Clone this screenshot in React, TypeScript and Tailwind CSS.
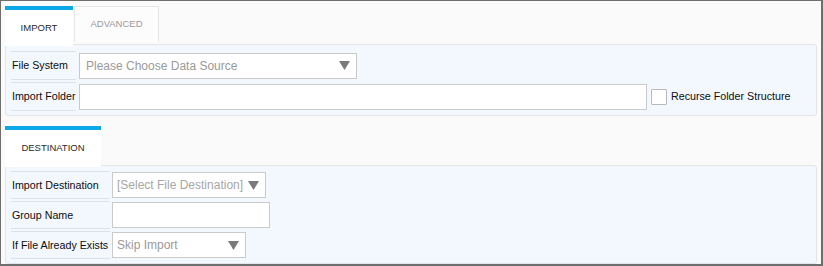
import React from "react";

const Arrow = () => (
  <svg width="11" height="9" viewBox="0 0 11 9" className="shrink-0">
    <polygon points="0,0 11,0 5.5,9" fill="#7a7a7a" />
  </svg>
);

const Label = ({ w, h, children }: { w: string; h: string; children: React.ReactNode }) => (
  <div className={`${w} ${h} border-y border-[#dde1e6] flex items-center pl-[1px] text-[10.7px] text-[#0d0d0d] whitespace-nowrap shrink-0`}>
    {children}
  </div>
);

export default function App() {
  return (
    <div
      className="w-[823px] h-[266px] overflow-hidden bg-[#fafafa] border-t border-l border-r-2 border-b-2 border-[#6e6e6e] pt-[5px] px-[4px]"
      style={{ fontFamily: '"Liberation Sans", Arial, sans-serif' }}
    >
      {/* Section 1 tabs */}
      <div className="flex items-start h-[38px]">
        <div className="relative z-10 w-[68px] h-[40px] bg-white border-t-4 border-[#0aa8e6] flex items-center justify-center text-[9.5px] text-[#2a2a2a]">
          IMPORT
        </div>
        <div className="ml-[1px] w-[85px] h-[36px] bg-[#fcfcfc] border-t border-x border-[#e6e6e6] flex items-center justify-center text-[9.5px] text-[#9a9a9a]">
          ADVANCED
        </div>
      </div>
      {/* Panel 1 */}
      <div className="h-[72px] border border-[#e3e5e8] rounded-[3px] bg-[#f3f8fe] pt-[6px] pl-[5px] flex flex-col gap-[2px]">
        <div className="flex items-center h-[29px]">
          <Label w="w-[65px]" h="h-[29px]">File System</Label>
          <div className="ml-[3px] w-[278px] h-[26px] border border-[#cacaca] bg-white flex items-center justify-between pl-[6px] pr-[6px]">
            <span className="text-[12px] text-[#9a9a9a]">Please Choose Data Source</span>
            <Arrow />
          </div>
        </div>
        <div className="flex items-center h-[29px]">
          <Label w="w-[65px]" h="h-[29px]">Import Folder</Label>
          <div className="ml-[3px] w-[568px] h-[26px] border border-[#cacaca] bg-white" />
          <div className="ml-[4px] w-[16px] h-[16px] border border-[#b9b9b9] bg-white rounded-[1px]" />
          <span className="ml-[4px] text-[10.7px] text-[#0d0d0d] whitespace-nowrap">Recurse Folder Structure</span>
        </div>
      </div>
      {/* Section 2 tabs */}
      <div className="mt-[10px] flex items-start h-[39px]">
        <div className="relative z-10 w-[96px] h-[41px] bg-white border-t-4 border-[#0aa8e6] flex items-center justify-center text-[9.5px] text-[#2a2a2a]">
          DESTINATION
        </div>
      </div>
      {/* Panel 2 */}
      <div className="h-[99px] border border-[#e3e5e8] rounded-[3px] bg-[#f3f8fe] pt-[5px] pl-[5px] flex flex-col gap-[2px]">
        <div className="flex items-center h-[28px]">
          <Label w="w-[99px]" h="h-[28px]">Import Destination</Label>
          <div className="ml-[2px] w-[154px] h-[26px] border border-[#cacaca] bg-white flex items-center justify-between pl-[4px] pr-[6px]">
            <span className="text-[12px] text-[#a6a6a6] whitespace-nowrap">[Select File Destination]</span>
            <Arrow />
          </div>
        </div>
        <div className="flex items-center h-[28px]">
          <Label w="w-[99px]" h="h-[28px]">Group Name</Label>
          <div className="ml-[2px] w-[158px] h-[26px] border border-[#cacaca] bg-white" />
        </div>
        <div className="flex items-center h-[28px]">
          <Label w="w-[99px]" h="h-[28px]">If File Already Exists</Label>
          <div className="ml-[2px] w-[134px] h-[26px] border border-[#cacaca] bg-white flex items-center justify-between pl-[4px] pr-[6px]">
            <span className="text-[12px] text-[#9a9a9a] whitespace-nowrap">Skip Import</span>
            <Arrow />
          </div>
        </div>
      </div>
    </div>
  );
}
